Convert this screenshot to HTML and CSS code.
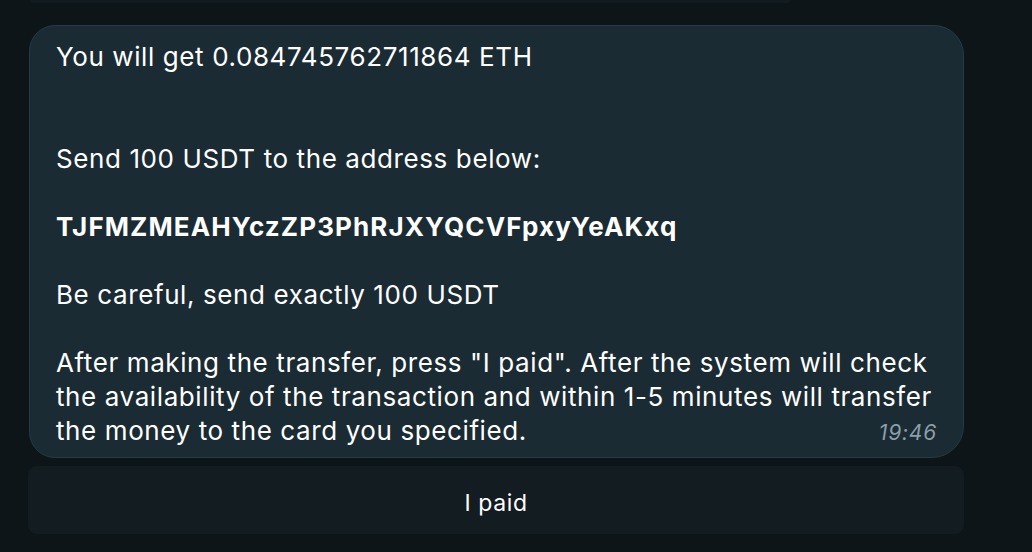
FILE: index.html
```html
<!DOCTYPE html>
<html>
<head>
<meta charset="utf-8">
<link rel="stylesheet" href="styles.css">
</head>
<body>
<div class="chat">
  <div class="prev-button"></div>
  <div class="bubble">
    <div class="text">You will get 0.084745762711864 ETH


Send 100 USDT to the address below:

<b>TJFMZMEAHYczZP3PhRJXYQCVFpxyYeAKxq</b>

Be careful, send exactly 100 USDT

After making the transfer, press "I paid". After the system will check the availability of the transaction and within 1-5 minutes will transfer the money to the card you specified.<span class="time">19:46</span></div>
  </div>
  <div class="button">I paid</div>
</div>
</body>
</html>
```
FILE: styles.css
```css
html, body {
  margin: 0;
  padding: 0;
  background: #0e1518;
  width: 1032px;
  height: 552px;
  overflow: hidden;
  font-family: Inter, "Noto Sans", sans-serif;
}
.chat {
  display: flex;
  flex-direction: column;
  padding: 0 68px 0 28px;
}
.prev-button {
  height: 3px;
  margin: 0 174px 0 2px;
  background: #121c20;
  border-radius: 0 0 8px 8px;
}
.bubble {
  margin-top: 22px;
  margin-left: 1px;
  background: #1b2b33;
  border: 1px solid #223b46;
  border-radius: 26px 30px 32px 26px;
  padding: 14px 24px 9px 26px;
}
.text {
  white-space: pre-line;
  color: #ffffff;
  font-size: 26px;
  line-height: 34px;
  letter-spacing: 0.6px;
}
.text b {
  font-weight: 700;
  letter-spacing: 1.1px;
}
.time {
  float: right;
  position: relative;
  top: 2px;
  margin-right: 2px;
  font-size: 21px;
  font-style: italic;
  color: #8c9eaa;
  line-height: 34px;
  letter-spacing: 0.8px;
}
.button {
  margin-top: 8px;
  height: 68px;
  box-sizing: border-box;
  padding-top: 5px;
  border-radius: 9px;
  background: #121c21;
  color: #ffffff;
  font-size: 23px;
  letter-spacing: 0.6px;
  display: flex;
  align-items: center;
  justify-content: center;
}
```
